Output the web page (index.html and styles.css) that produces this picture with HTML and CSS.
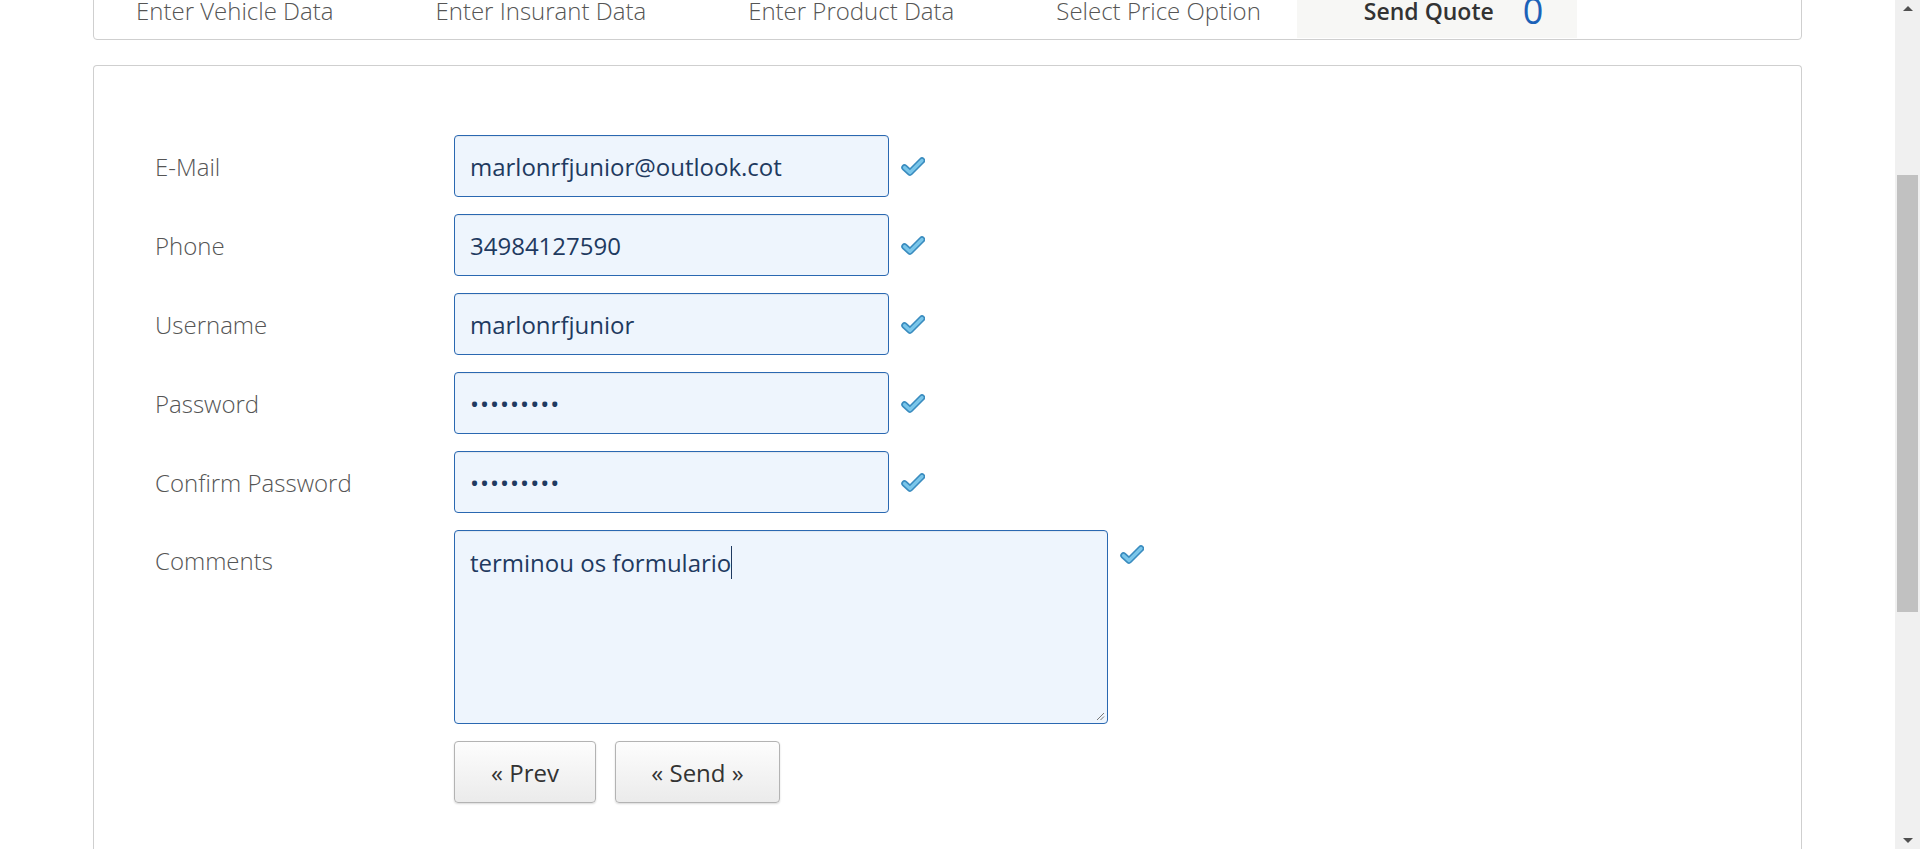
FILE: index.html
```html
<!DOCTYPE html>
<html lang="en">
<head>
<meta charset="utf-8">
<title>Send Quote</title>
<link rel="stylesheet" href="styles.css">
</head>
<body>
<div class="page">
  <div class="container">
    <nav class="wizard">
      <ul class="steps">
        <li class="step first">Enter Vehicle Data</li>
        <li class="step">Enter Insurant Data</li>
        <li class="step">Enter Product Data</li>
        <li class="step">Select Price Option</li>
        <li class="step active"><span class="step-name">Send Quote</span><span class="counter">0</span></li>
      </ul>
    </nav>
    <section class="panel">
      <form class="quote-form">
        <div class="row">
          <label class="label">E-Mail</label>
          <input class="field" type="text" value="marlonrfjunior@outlook.cot">
          <span class="ok"><svg viewBox="0 0 24 19" width="24" height="19"><path class="ok-outer" d="M3.5 10.5 L9 15.5 L21 3.5"/><path class="ok-inner" d="M3.5 10.5 L9 15.5 L21 3.5"/></svg></span>
        </div>
        <div class="row">
          <label class="label">Phone</label>
          <input class="field" type="text" value="34984127590">
          <span class="ok"><svg viewBox="0 0 24 19" width="24" height="19"><path class="ok-outer" d="M3.5 10.5 L9 15.5 L21 3.5"/><path class="ok-inner" d="M3.5 10.5 L9 15.5 L21 3.5"/></svg></span>
        </div>
        <div class="row">
          <label class="label">Username</label>
          <input class="field" type="text" value="marlonrfjunior">
          <span class="ok"><svg viewBox="0 0 24 19" width="24" height="19"><path class="ok-outer" d="M3.5 10.5 L9 15.5 L21 3.5"/><path class="ok-inner" d="M3.5 10.5 L9 15.5 L21 3.5"/></svg></span>
        </div>
        <div class="row">
          <label class="label">Password</label>
          <input class="field" type="password" value="123456789">
          <span class="ok"><svg viewBox="0 0 24 19" width="24" height="19"><path class="ok-outer" d="M3.5 10.5 L9 15.5 L21 3.5"/><path class="ok-inner" d="M3.5 10.5 L9 15.5 L21 3.5"/></svg></span>
        </div>
        <div class="row">
          <label class="label">Confirm Password</label>
          <input class="field" type="password" value="123456789">
          <span class="ok"><svg viewBox="0 0 24 19" width="24" height="19"><path class="ok-outer" d="M3.5 10.5 L9 15.5 L21 3.5"/><path class="ok-inner" d="M3.5 10.5 L9 15.5 L21 3.5"/></svg></span>
        </div>
        <div class="row row-top">
          <label class="label label-top">Comments</label>
          <div class="area">terminou os formulario<span class="caret"></span>
            <svg class="grip" viewBox="0 0 10 10" width="10" height="10"><path d="M9 2 L2 9 M9 5.5 L5.5 9" /></svg>
          </div>
          <span class="ok ok-top"><svg viewBox="0 0 24 19" width="24" height="19"><path class="ok-outer" d="M3.5 10.5 L9 15.5 L21 3.5"/><path class="ok-inner" d="M3.5 10.5 L9 15.5 L21 3.5"/></svg></span>
        </div>
        <div class="actions">
          <button type="button" class="btn btn-prev">« Prev</button>
          <button type="button" class="btn btn-send">« Send »</button>
        </div>
      </form>
    </section>
  </div>
</div>
<div class="scrollbar">
  <div class="sb-btn"><span class="tri-up"></span></div>
  <div class="sb-track"><div class="sb-thumb"></div></div>
  <div class="sb-btn"><span class="tri-down"></span></div>
</div>
</body>
</html>
```
FILE: styles.css
```css
html, body {
  margin: 0;
  padding: 0;
  height: 849px;
  overflow: hidden;
  background: #ffffff;
}
body {
  display: flex;
  font-family: "Open Sans", "Liberation Sans", sans-serif;
  color: #555;
}
.page {
  flex: 1;
  min-width: 0;
}
.container {
  width: 1709px;
  margin: 0 auto;
}

/* wizard nav */
.wizard {
  margin-top: -30px;
  border: 1px solid #cfcfcf;
  border-radius: 4px;
  height: 70px;
  box-sizing: border-box;
  padding-bottom: 1px;
  background: #fff;
}
.steps {
  list-style: none;
  margin: 0;
  padding: 0;
  display: flex;
  height: 100%;
}
.step {
  padding: 25px 36px 0 66px;
  font-size: 24px;
  font-weight: 300;
  line-height: 30px;
  color: #555;
  white-space: nowrap;
}
.step.first {
  padding-left: 42px;
}
.step.active {
  background: #f7f7f5;
  color: #333;
  padding-right: 34px;
  padding-left: 67px;
  display: flex;
  align-items: flex-start;
}
.step-name {
  font-weight: 600;
  font-size: 23px;
}
.counter {
  margin-left: 29px;
  color: #1c62b8;
  font-size: 36px;
  font-weight: 400;
  line-height: 30px;
  margin-top: 0;
}

/* panel */
.panel {
  margin-top: 25px;
  border: 1px solid #cfcfcf;
  border-bottom: none;
  border-radius: 4px 4px 0 0;
  height: 900px;
  box-sizing: border-box;
  padding: 69px 0 0 61px;
}
.quote-form {
  display: flex;
  flex-direction: column;
}
.row {
  display: flex;
  align-items: center;
  margin-bottom: 17px;
}
.row-top {
  align-items: flex-start;
  margin-bottom: 17px;
}
.label {
  width: 299px;
  font-size: 24px;
  font-weight: 300;
  color: #555;
}
.label-top {
  padding-top: 14px;
}
.field {
  width: 435px;
  height: 62px;
  box-sizing: border-box;
  border: 1px solid #2a68b1;
  border-radius: 4px;
  background: #eef5fd;
  padding: 0 15px;
  font-family: "Open Sans", "Liberation Sans", sans-serif;
  font-size: 24px;
  color: #1f3a60;
  outline: none;
  margin: 0;
  box-shadow: inset 0 1px 1px rgba(0,0,0,0.06);
}
.field[type="password"] {
  letter-spacing: 1px;
}
.ok {
  margin-left: 12px;
  width: 24px;
  height: 19px;
  display: flex;
}
.ok-top {
  margin-top: 15px;
}
.ok-outer {
  fill: none;
  stroke: #3a8cbf;
  stroke-width: 6.5;
  stroke-linecap: round;
  stroke-linejoin: round;
}
.ok-inner {
  fill: none;
  stroke: #7ac6ea;
  stroke-width: 3.2;
  stroke-linecap: round;
  stroke-linejoin: round;
}
.area {
  position: relative;
  width: 654px;
  height: 194px;
  box-sizing: border-box;
  border: 1px solid #2a68b1;
  border-radius: 4px;
  background: #eef5fd;
  padding: 15px 15px 12px;
  font-size: 24px;
  line-height: 33px;
  color: #1f3a60;
  box-shadow: inset 0 1px 1px rgba(0,0,0,0.06);
}
.caret {
  display: inline-block;
  width: 1px;
  height: 33px;
  background: #1f3a60;
  vertical-align: top;
}
.grip {
  position: absolute;
  right: 2px;
  bottom: 2px;
}
.grip path {
  stroke: #777;
  stroke-width: 1;
  fill: none;
}

/* buttons */
.actions {
  display: flex;
  gap: 19px;
  padding-left: 299px;
  margin-top: 0;
}
.btn {
  height: 62px;
  box-sizing: border-box;
  border: 1px solid #b3b3b3;
  border-radius: 4px;
  background: linear-gradient(#fdfdfd, #ebebeb);
  font-family: "Open Sans", "Liberation Sans", sans-serif;
  font-size: 24px;
  color: #333;
  box-shadow: 0 1px 2px rgba(0,0,0,0.15);
  cursor: pointer;
}
.btn-prev { width: 142px; }
.btn-send { width: 165px; }

/* scrollbar */
.scrollbar {
  width: 25px;
  flex: none;
  background: #f0f0f0;
  display: flex;
  flex-direction: column;
}
.sb-btn {
  height: 17px;
  display: flex;
  align-items: center;
  justify-content: center;
}
.sb-track {
  flex: 1;
  padding-top: 158px;
}
.sb-thumb {
  margin: 0 2px;
  height: 437px;
  background: #c1c1c1;
}
.tri-up, .tri-down {
  width: 0;
  height: 0;
  border-left: 5px solid transparent;
  border-right: 5px solid transparent;
}
.tri-up { border-bottom: 5px solid #505050; }
.tri-down { border-top: 5px solid #505050; }
```
